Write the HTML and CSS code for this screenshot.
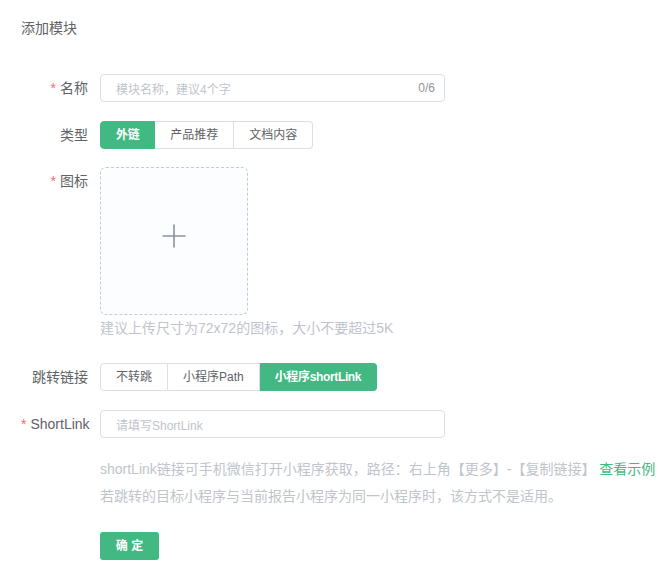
FILE: index.html
```html
<!DOCTYPE html>
<html lang="zh-CN">
<head>
<meta charset="utf-8">
<title>添加模块</title>
<link rel="stylesheet" href="styles.css">
</head>
<body>
<div class="page">
  <div class="title">添加模块</div>
  <div class="form">
    <div class="row row-name">
      <div class="label"><span class="req">*</span>名称</div>
      <div class="input">
        <span class="placeholder">模块名称，建议4个字</span>
        <span class="count">0/6</span>
      </div>
    </div>
    <div class="row row-type">
      <div class="label">类型</div>
      <div class="seg">
        <span class="seg-btn active">外链</span>
        <span class="seg-btn">产品推荐</span>
        <span class="seg-btn">文档内容</span>
      </div>
    </div>
    <div class="row row-icon">
      <div class="label"><span class="req">*</span>图标</div>
      <div class="ctrl">
        <div class="upload">
          <svg class="plus" width="24" height="24" viewBox="0 0 24 24"><path d="M12 0.5V23.5M0.5 12H23.5" stroke="#8c939d" stroke-width="1.6" fill="none"/></svg>
        </div>
        <div class="tip">建议上传尺寸为72x72的图标，大小不要超过5K</div>
      </div>
    </div>
    <div class="row row-jump">
      <div class="label">跳转链接</div>
      <div class="seg">
        <span class="seg-btn">不转跳</span>
        <span class="seg-btn">小程序Path</span>
        <span class="seg-btn active">小程序shortLink</span>
      </div>
    </div>
    <div class="row row-short">
      <div class="label"><span class="req">*</span>ShortLink</div>
      <div class="input">
        <span class="placeholder">请填写ShortLink</span>
      </div>
    </div>
    <div class="row row-help">
      <div class="label"></div>
      <div class="help">
        <div>shortLink链接可手机微信打开小程序获取，路径：右上角【更多】-【复制链接】 <span class="link">查看示例</span></div>
        <div>若跳转的目标小程序与当前报告小程序为同一小程序时，该方式不是适用。</div>
      </div>
    </div>
    <div class="row row-submit">
      <div class="label"></div>
      <span class="btn">确 定</span>
    </div>
  </div>
</div>
</body>
</html>
```

FILE: styles.css
```css
* { box-sizing: border-box; }
html, body { margin: 0; padding: 0; background: #fff; }
body {
  font-family: "Liberation Sans", "Noto Sans CJK SC", sans-serif;
  font-size: 14px;
  color: #606266;
}
.page { padding: 18px 20px 0 21px; }
.title { font-size: 14px; line-height: 20px; color: #606266; }
.form { margin-top: 36px; }
.row { display: flex; align-items: flex-start; }
.label {
  width: 79px;
  flex: none;
  padding-right: 12px;
  text-align: right;
  line-height: 28px;
  font-size: 14px;
  color: #606266;
  white-space: nowrap;
}
.req { color: #f56c6c; margin-right: 4px; }
.input {
  width: 345px;
  height: 28px;
  border: 1px solid #dcdfe6;
  border-radius: 4px;
  display: flex;
  align-items: center;
  justify-content: space-between;
  padding: 0 9px 0 15px;
  font-size: 12px;
}
.placeholder { color: #c0c4cc; }
.count { color: #909399; }
.seg { display: flex; }
.seg-btn {
  height: 28px;
  line-height: 26px;
  padding: 0 15px;
  font-size: 12px;
  color: #606266;
  border: 1px solid #dcdfe6;
  border-left: none;
  background: #fff;
}
.seg-btn:first-child { border-left: 1px solid #dcdfe6; border-radius: 4px 0 0 4px; }
.seg-btn:last-child { border-radius: 0 4px 4px 0; }
.seg-btn.active {
  background: #42b883;
  border-color: #42b883;
  color: #fff;
  font-weight: 700;
  letter-spacing: -0.35px;
}
.row-type { margin-top: 19px; }
.row-icon { margin-top: 18px; }
.upload {
  width: 148px;
  height: 148px;
  border: 1px dashed #c0ccda;
  border-radius: 6px;
  background: #fbfdff;
  display: flex;
  align-items: center;
  justify-content: center;
  padding-bottom: 11px;
}
.plus { display: block; }
.tip { margin-top: 4px; font-size: 14px; line-height: 18px; color: #c0c4cc; }
.row-jump { margin-top: 26px; }
.row-short { margin-top: 19px; }
.row-help { margin-top: 18px; }
.help { font-size: 14px; line-height: 27px; color: #c0c4cc; white-space: nowrap; }
.link { color: #42b883; }
.row-submit { margin-top: 22px; }
.btn {
  display: inline-block;
  width: 59px;
  height: 28px;
  line-height: 28px;
  text-align: center;
  background: #42b883;
  color: #fff;
  font-size: 12px;
  font-weight: 700;
  border-radius: 3px;
}
```
